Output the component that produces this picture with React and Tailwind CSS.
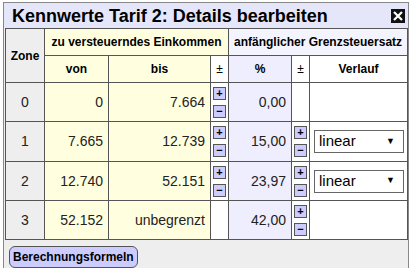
import React from "react";

const rows = [
  { zone: "0", von: "0", bis: "7.664", pm1: true, pct: "0,00", pm2: false, verlauf: false },
  { zone: "1", von: "7.665", bis: "12.739", pm1: true, pct: "15,00", pm2: true, verlauf: true },
  { zone: "2", von: "12.740", bis: "52.151", pm1: true, pct: "23,97", pm2: true, verlauf: true },
  { zone: "3", von: "52.152", bis: "unbegrenzt", pm1: false, pct: "42,00", pm2: true, verlauf: false },
];

function PlusMinus() {
  return (
    <div className="flex flex-col items-center gap-[5px]">
      <button className="w-[13px] h-[13px] bg-[#ccccff] border border-[#555] flex items-center justify-center text-[11px] leading-none font-bold text-black">
        +
      </button>
      <button className="w-[13px] h-[13px] bg-[#ccccff] border border-[#555] flex items-center justify-center text-[11px] leading-none font-bold text-black">
        −
      </button>
    </div>
  );
}

function Verlauf() {
  return (
    <div className="ml-[4px] w-[90px] h-[23px] bg-white border border-[#666] flex items-center justify-between pl-[4px] pr-[8px]">
      <span className="text-[15px] text-black">linear</span>
      <span className="text-[9px] text-black">▼</span>
    </div>
  );
}

export default function App() {
  const th = "border border-[#555] text-[12px] font-bold text-black p-0";
  const td = "border border-[#555] text-[14px] text-[#222] p-0";

  return (
    <div className="w-[410px] h-[268px] bg-white overflow-hidden font-['Liberation_Sans',Arial,sans-serif]">
      <div className="ml-[3px] mt-[2px] w-[406px] h-[300px] border border-[#888] bg-[#eeeeee] px-[1px]">
        {/* Title */}
        <div className="-mx-[1px] h-[25px] bg-[#e6e6fa] flex items-center justify-between pl-[8px] pr-[3px]">
          <h1 className="text-[18px] font-bold text-black leading-none">Kennwerte Tarif 2: Details bearbeiten</h1>
          <svg width="14" height="14" viewBox="0 0 14 14">
            <rect x="0" y="0" width="14" height="14" fill="#111" />
            <path d="M3 3 L11 11 M11 3 L3 11" stroke="#fff" strokeWidth="2.2" />
          </svg>
        </div>

        <table className="border-collapse table-fixed w-[402px]">
          <colgroup>
            <col className="w-[39px]" />
            <col className="w-[64px]" />
            <col className="w-[102px]" />
            <col className="w-[18px]" />
            <col className="w-[63px]" />
            <col className="w-[18px]" />
            <col className="w-[98px]" />
          </colgroup>
          <thead>
            <tr className="h-[27px]">
              <th rowSpan={2} className={`${th} bg-[#eeeeee] align-middle`}>
                Zone
              </th>
              <th colSpan={3} className={`${th} bg-[#ffffe0]`}>
                zu versteuerndes Einkommen
              </th>
              <th colSpan={3} className={`${th} bg-[#f4f4ff]`}>
                anfänglicher Grenzsteuersatz
              </th>
            </tr>
            <tr className="h-[27px]">
              <th className={`${th} bg-[#ffffe0]`}>von</th>
              <th className={`${th} bg-[#ffffe0]`}>bis</th>
              <th className={`${th} bg-white font-normal`}>±</th>
              <th className={`${th} bg-[#eeeeff]`}>%</th>
              <th className={`${th} bg-white font-normal`}>±</th>
              <th className={`${th} bg-white`}>Verlauf</th>
            </tr>
          </thead>
          <tbody>
            {rows.map((r, i) => (
              <tr key={r.zone} className={i === 1 ? "h-[40px]" : "h-[39px]"}>
                <td className={`${td} bg-[#eeeeee] text-center`}>{r.zone}</td>
                <td className={`${td} bg-[#ffffe0] text-right pr-[5px]`}>{r.von}</td>
                <td className={`${td} bg-[#ffffe0] text-right pr-[5px]`}>{r.bis}</td>
                <td className={`${td} bg-white`}>{r.pm1 && <PlusMinus />}</td>
                <td className={`${td} bg-[#eeeeff] text-right pr-[5px]`}>{r.pct}</td>
                <td className={`${td} bg-white`}>{r.pm2 && <PlusMinus />}</td>
                <td className={`${td} bg-white`}>{r.verlauf && <Verlauf />}</td>
              </tr>
            ))}
          </tbody>
        </table>

        <div className="pt-[4px] pl-[4px]">
          <button className="h-[22px] px-[3px] bg-[#ccccff] border border-[#555] rounded-[6px] text-[12px] font-bold text-black leading-none">
            Berechnungsformeln
          </button>
        </div>
      </div>
    </div>
  );
}
